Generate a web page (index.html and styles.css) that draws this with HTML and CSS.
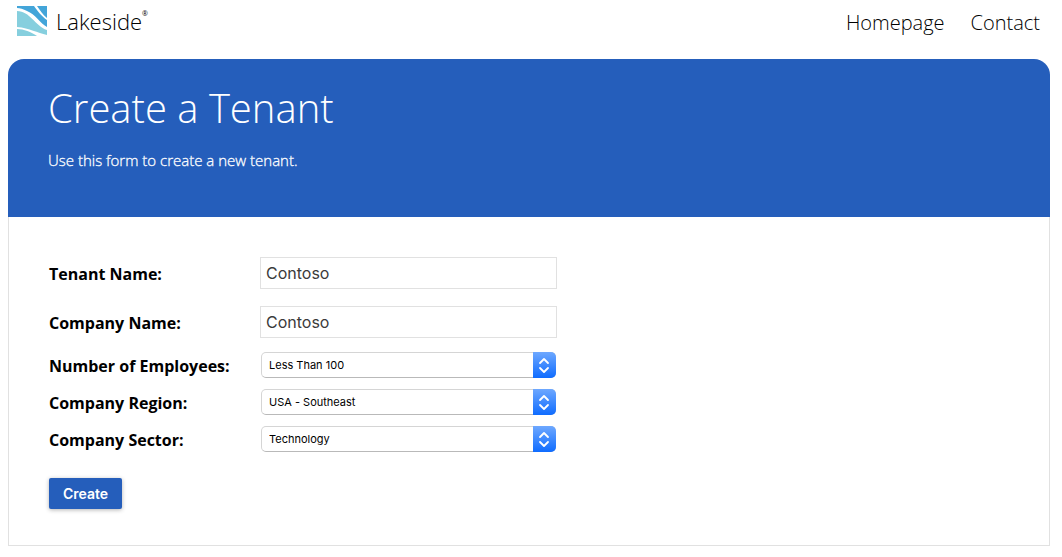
FILE: index.html
```html
<!DOCTYPE html>
<html lang="en">
<head>
<meta charset="utf-8">
<meta name="viewport" content="width=device-width, initial-scale=1">
<title>Create a Tenant</title>
<link rel="stylesheet" href="styles.css">
</head>
<body>
<header class="site-header">
  <a class="brand" href="#">
    <svg class="brand-mark" viewBox="0 0 30 30" aria-hidden="true">
      <path fill="#43a5d9" d="M0 0H17C20 4 25 11 30 14V21C24 18 18 8 10 5C6 3 3 2 0 2Z"/>
      <path fill="#43a5d9" d="M20 0H30V12C26 9 23 4 20 0Z"/>
      <path fill="#86cfde" d="M0 5C13 5 18 20 30 24V29C20 27 13 22 0 21Z"/>
      <path fill="#86cfde" d="M0 23C7 23 14 26 20 30H0Z"/>
    </svg>
    <span class="brand-name">Lakeside</span><span class="brand-reg">®</span>
  </a>
  <nav class="site-nav">
    <a href="#">Homepage</a>
    <a href="#">Contact</a>
  </nav>
</header>
<main class="card">
  <div class="banner">
    <h1 class="title">Create a Tenant</h1>
    <p class="lead">Use this form to create a new tenant.</p>
  </div>
  <form class="form">
    <div class="row row-text">
      <label for="tenant">Tenant Name:</label>
      <input class="text" id="tenant" type="text" value="Contoso">
    </div>
    <div class="row row-text">
      <label for="company">Company Name:</label>
      <input class="text" id="company" type="text" value="Contoso">
    </div>
    <div class="row">
      <label for="employees">Number of Employees:</label>
      <span class="select-box">
        <select id="employees"><option>Less Than 100</option></select>
        <svg class="stepper" viewBox="0 0 23 26" aria-hidden="true"><path d="M7 11l4-4 4 4M7 16l4 4 4-4"/></svg>
      </span>
    </div>
    <div class="row">
      <label for="region">Company Region:</label>
      <span class="select-box">
        <select id="region"><option>USA - Southeast</option></select>
        <svg class="stepper" viewBox="0 0 23 26" aria-hidden="true"><path d="M7 11l4-4 4 4M7 16l4 4 4-4"/></svg>
      </span>
    </div>
    <div class="row">
      <label for="sector">Company Sector:</label>
      <span class="select-box">
        <select id="sector"><option>Technology</option></select>
        <svg class="stepper" viewBox="0 0 23 26" aria-hidden="true"><path d="M7 11l4-4 4 4M7 16l4 4 4-4"/></svg>
      </span>
    </div>
    <button class="submit" type="submit">Create</button>
  </form>
</main>
</body>
</html>
```
FILE: styles.css
```css
* { box-sizing: border-box; }

body {
  margin: 0 12px 0 8px;
  background: #fff;
  color: #000;
  font-family: "Open Sans", sans-serif;
  font-size: 16px;
}

.site-header {
  display: flex;
  justify-content: space-between;
  align-items: flex-start;
  padding: 6px 10px 0 9px;
  margin-bottom: 19px;
}

.site-header a { color: #000; text-decoration: none; }

.brand { display: flex; align-items: flex-start; }
.brand-mark { width: 30px; height: 30px; margin-right: 9px; }
.brand-name { font-size: 22px; line-height: 30px; font-weight: 350; }
.brand-reg { font-size: 7px; line-height: 16px; }

.site-nav {
  display: flex;
  gap: 26px;
  font-size: 20px;
  line-height: 34px;
  font-weight: 300;
}

.banner {
  padding: 22px 40px 45px;
  border-radius: 16px 16px 0 0;
  background: #255ebb;
  color: #fff;
}

.title { margin: 0; font-size: 40px; line-height: 54px; font-weight: 320; }
.lead { margin: 13px 0 0; font-size: 15px; line-height: 24px; font-weight: 300; -webkit-text-stroke: 0.3px #fff; }

.form {
  padding: 40px 40px 36px;
  border: 1px solid #e1e1e1;
  border-top: 0;
}

.row {
  display: grid;
  grid-template-columns: 211px minmax(0, 297px);
  align-items: center;
  margin-bottom: 11px;
}

.row label { padding-top: 2px; font-weight: 700; line-height: 24px; }
.row-text { margin-bottom: 17px; }
.row-text + .row:not(.row-text) { margin-top: -3px; }

.text {
  width: 100%;
  height: 32px;
  padding: 0 5px;
  border: 1px solid #e1e1e1;
  background: #fff;
  color: #3b3b3b;
  font: 16px Inter, sans-serif;
}

.select-box { position: relative; margin: 0 1px; }

.select-box select {
  display: block;
  width: 100%;
  height: 26px;
  padding: 0 30px 0 7px;
  appearance: none;
  border: 1px solid #d5d5d5;
  border-bottom-color: #b9b9b9;
  border-radius: 5px;
  background: #fff;
  color: #000;
  font: 11px Inter, sans-serif;
}

.stepper {
  position: absolute;
  top: 0;
  right: 0;
  width: 23px;
  height: 26px;
  border-radius: 0 5px 5px 0;
  background: linear-gradient(#6ea8ff, #0f6cff);
  pointer-events: none;
}

.stepper path {
  fill: none;
  stroke: #fff;
  stroke-width: 1.800;
  stroke-linecap: round;
  stroke-linejoin: round;
}

.submit {
  display: block;
  height: 31px;
  margin-top: 26px;
  padding: 0 14px;
  border: 0;
  border-radius: 2px;
  background: #255ebb;
  box-shadow: 0 1px 4px rgba(0, 0, 0, 0.3);
  color: #fff;
  font: 600 14px Inter, sans-serif;
}
```
